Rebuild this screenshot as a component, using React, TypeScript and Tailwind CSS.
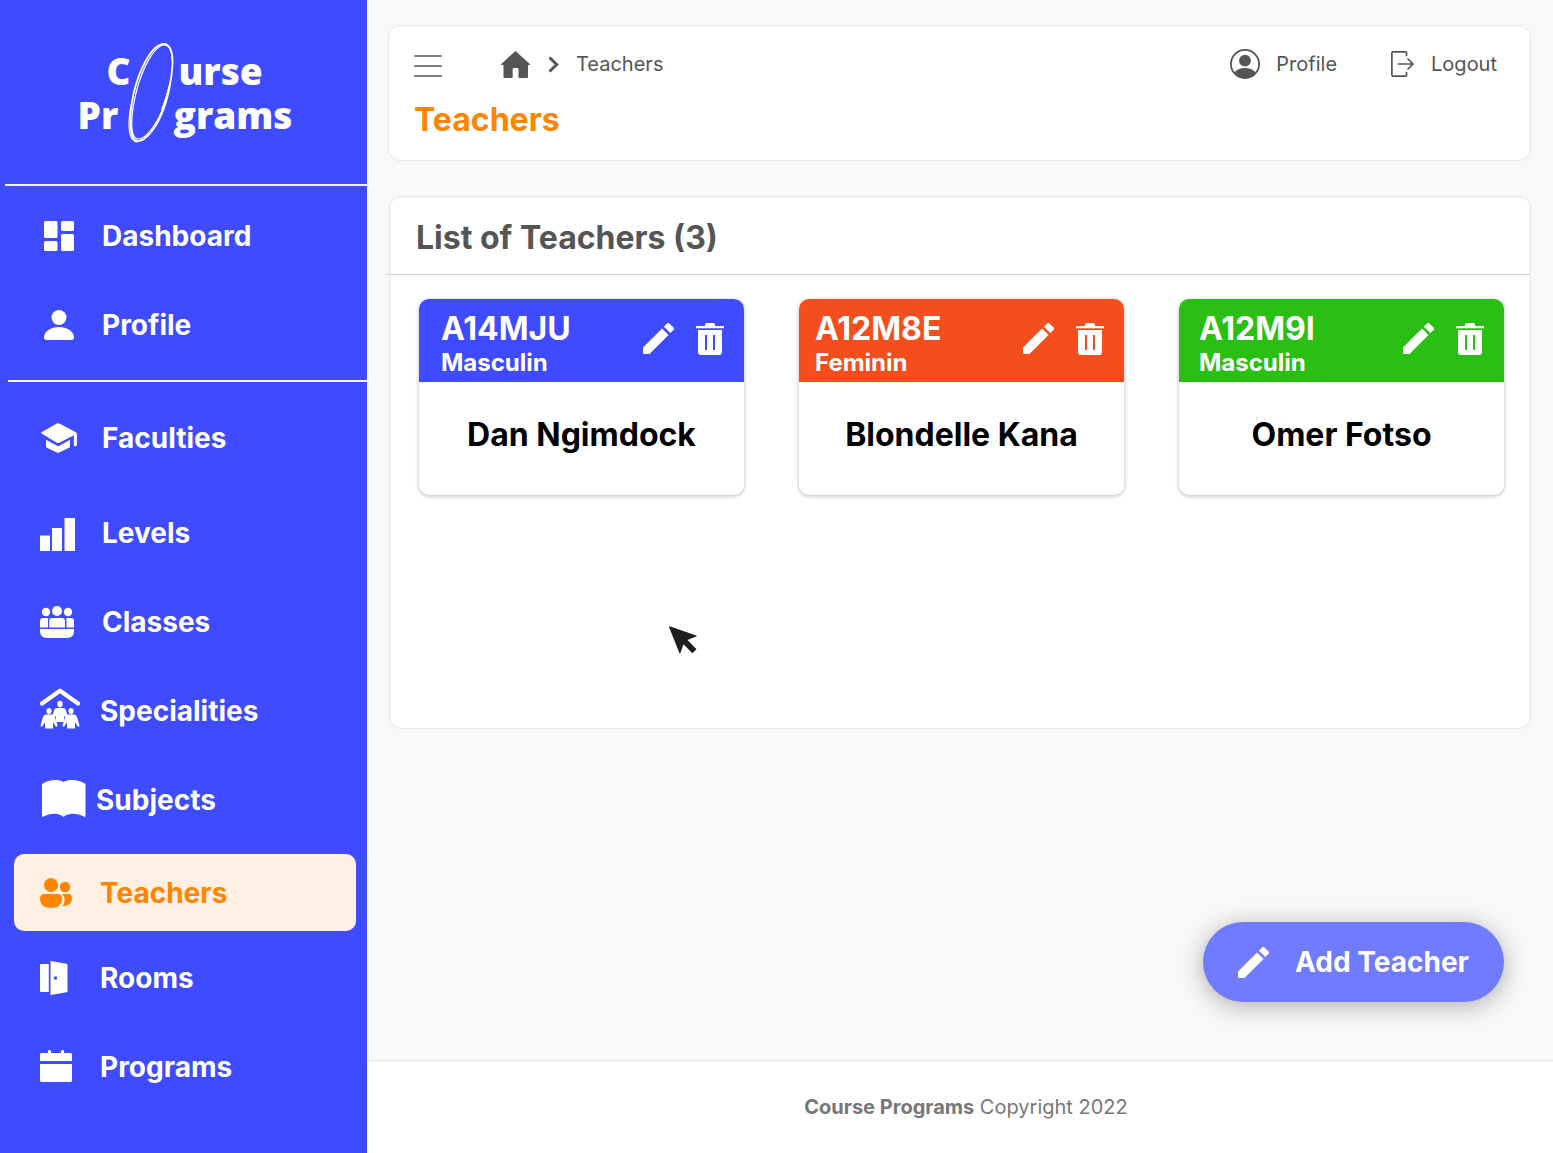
import React from "react";

type IconProps = { className?: string };

const Logo = () => (
  <div className="relative w-[220px] font-['Open_Sans',sans-serif] text-[37px] leading-[44px] font-extrabold text-white">
    <p className="flex pl-[29px]">
      <span className="w-[72px]">C</span>
      <span>urse</span>
    </p>
    <p className="flex">
      <span className="w-24">Pr</span>
      <span>grams</span>
    </p>
    <svg
      viewBox="0 0 220 104"
      aria-hidden="true"
      className="absolute -top-2 left-0 h-[104px] w-[220px]"
      fill="none"
      stroke="#fff"
      strokeLinecap="round"
    >
      <path
        strokeWidth="1.800"
        d="M84 68c5-10 10-28 10.500-45C95 9 91 2 84.500 3 73 5 61 29 55.500 53 50.500 76 51.500 99 59 100c8 1 20-13 27-33 4-11 6-21 7-30"
      />
      <path
        strokeWidth="1.200"
        d="M94 18c0-10-4-15-9-14-9 2-21 23-27 48-5 21-7 45 2 46 9 0 21-18 26-34 2-7 4-12 5-18"
      />
      <path strokeWidth="1.200" d="M85 67c1-6 4-12 7-25M53 64c-4 22-2 36 6 37" />
    </svg>
  </div>
);

const DashboardIcon = () => (
  <svg viewBox="-4 0 38 30" width="38" height="30" fill="currentColor">
    <rect width="13.500" height="17" rx="1.500" />
    <rect y="20" width="13.500" height="10" rx="1.500" />
    <rect x="17" width="13" height="10" rx="1.500" />
    <rect x="17" y="13" width="13" height="17" rx="1.500" />
  </svg>
);

const PersonIcon = () => (
  <svg viewBox="-4 0 38 30" width="38" height="30" fill="currentColor">
    <circle cx="15" cy="7.500" r="7.500" />
    <path d="M0 27.500C0 21.500 7 17 15 17s15 4.500 15 10.500c0 1.500-.8 2.500-2.500 2.500h-25C.8 30 0 29 0 27.500z" />
  </svg>
);

const FacultiesIcon = () => (
  <svg viewBox="-1 0 38 30" width="38" height="30" fill="currentColor">
    <path d="M.9 9 15.800.6q1.300-.7 2.600 0l16.500 8.600q1 .6 1 1.800v10.800a1.500 1.500 0 0 1-3 0V12.200L18.400 19.700q-1.300.6-2.600 0L.9 10.800Q-.3 9.900.9 9z" />
    <path d="M5 16.800l11 6q1.200.6 2.400 0l10.600-6v6.500q0 .9-.9 1.400L18.300 29.500q-1.200.7-2.400 0L5.900 24.700Q5 24.200 5 23.300z" />
  </svg>
);

const LevelsIcon = () => (
  <svg viewBox="1 -4 36 37" width="36" height="37" fill="currentColor">
    <rect x="1" y="17.500" width="10" height="15.500" />
    <rect x="13" y="10" width="10" height="23" />
    <rect x="25.500" width="10.500" height="33" />
  </svg>
);

const ClassesIcon = () => (
  <svg viewBox="2 0 34 32" width="34" height="32" fill="currentColor">
    <circle cx="19" cy="5" r="5" />
    <circle cx="8" cy="6" r="4.200" />
    <circle cx="30" cy="6" r="4.200" />
    <path d="M5 12h5.500q-.5 1.200-.5 3v6.500H2V15q0-3 3-3zM28 12h5q3 0 3 3v6.500h-7.500V15q0-1.800-.5-3zM14 12h10q3 0 3 3v6.500H11.200V15q0-3 2.800-3zM2 23h34v2q0 7-7 7H9q-7 0-7-7z" />
  </svg>
);

const FigureBody = ({ x, y }: { x: number; y: number }) => (
  <path
    transform={`translate(${x} ${y})`}
    d="M-3 0h6c1.400 0 2.200.8 2.800 2l2.600 8.500c.4 1.700-1.300 2.400-2 1L4 7.500V14H-4V7.500l-2.400 4c-.7 1.400-2.400.7-2-1L-5.800 2C-5.200.8-4.400 0-3 0z"
  />
);

const SpecialitiesIcon = () => (
  <svg viewBox="0 0 40 46" width="40" height="46" fill="currentColor">
    <path
      d="M2 15.500 20 2.700 38 15.500"
      fill="none"
      stroke="currentColor"
      strokeWidth="4.300"
      strokeLinecap="round"
      strokeLinejoin="round"
    />
    <ellipse cx="20" cy="16" rx="2.600" ry="3.200" />
    <ellipse cx="9" cy="23" rx="2.600" ry="2.900" />
    <ellipse cx="31" cy="23" rx="2.600" ry="2.900" />
    <FigureBody x={20} y={20} />
    <FigureBody x={9} y={26.5} />
    <FigureBody x={31} y={26.5} />
  </svg>
);

const SubjectsIcon = () => (
  <svg viewBox="-2 0 46 39" width="46" height="39" fill="currentColor">
    <path d="M0 4C6 0 15.500-1.500 21.500 2 27.500-1.500 37.500 0 43.500 4v32.500q-.5.700-1.200.2C36 33.500 27 32 21.500 37 16 32 7.500 33.500 1.200 36.700.5 37.200 0 36.500 0 36z" />
  </svg>
);

const TeachersIcon = () => (
  <svg viewBox="0 0 32 30" width="32" height="30" fill="currentColor">
    <circle cx="11" cy="7" r="7" />
    <circle cx="25" cy="9" r="5.200" />
    <path d="M4.500 16h13q4.500 0 4.500 4.500C22 27 17.500 30 11 30S0 27 0 20.500Q0 16 4.500 16zM22 16h6q4 0 4 4c0 5.500-4.500 8.500-9.500 8 1.500-2 2.200-4.500 2-7.500q0-3-2.500-4.500z" />
  </svg>
);

const RoomsIcon = () => (
  <svg viewBox="0 0 28 34" width="28" height="34" fill="currentColor">
    <path d="M1 3h7.800v28H1q-1 0-1-1V4q0-1 1-1z" />
    <path
      fillRule="evenodd"
      d="M10.500 0l16 2.800q1 .2 1 1.200v26q0 1-1 1.200l-16 2.800zM15.500 15.200a1.800 1.800 0 1 0 0 3.600 1.800 1.800 0 1 0 0-3.600z"
    />
  </svg>
);

const ProgramsIcon = () => (
  <svg viewBox="0 0 32 33" width="32" height="33" fill="currentColor">
    <path d="M1.500 3H8V1q0-1 1.500-1T11 1v2h10V1q0-1 1.500-1T24 1v2h6.500Q32 3 32 4.500V11H0V4.500Q0 3 1.500 3zM0 14h32v16.500q0 1.500-1.500 1.500h-29Q0 32 0 30.500z" />
  </svg>
);

const PencilIcon = () => (
  <svg viewBox="3 3 18 18" width="31" height="31" fill="currentColor">
    <path d="M3 17.460v3.040c0 .28.22.5.5.5h3.040c.13 0 .26-.05.35-.15L17.810 9.940l-3.750-3.750L3.150 17.100c-.1.100-.15.220-.15.360zM20.710 7.040a.996.996 0 0 0 0-1.410l-2.340-2.340a.996.996 0 0 0-1.410 0l-1.830 1.830 3.750 3.750 1.830-1.830z" />
  </svg>
);

const TrashIcon = () => (
  <svg viewBox="0 0 28 32" width="28" height="32" fill="currentColor">
    <path d="M0 3h9V1.500Q9 0 10.500 0h7Q19 0 19 1.500V3h9v2.200H0z" />
    <path
      fillRule="evenodd"
      d="M2 7h24v22q0 3-3 3H5q-3 0-3-3zM9 12v15h2V12zM17 12v15h2V12z"
    />
  </svg>
);

const MenuIcon = () => (
  <svg viewBox="0 0 28 22" width="28" height="22" stroke="currentColor" strokeWidth="1.400" strokeLinecap="round">
    <path d="M.7 1h26.600M.7 11h26.600M.7 21h26.600" />
  </svg>
);

const HomeIcon = () => (
  <svg viewBox="0 0 29 27" width="29" height="27" fill="currentColor">
    <path d="M14.500 0 29 13.200l-.5.900H27V26q0 1-1 1h-7.500q-1 0-1-1v-8q0-1-1-1h-3.800q-1 0-1 1v8q0 1-1 1H3.500q-1 0-1-1V14.100H.5L0 13.200z" />
  </svg>
);

const ChevronIcon = () => (
  <svg viewBox="0 0 11 17" width="11" height="17" fill="none" stroke="currentColor" strokeWidth="3">
    <path d="M1.500 1.500 8.700 8.500 1.500 15.500" />
  </svg>
);

const AvatarIcon = () => (
  <svg viewBox="0 0 30 30" width="30" height="30" fill="currentColor">
    <circle cx="15" cy="15" r="14.100" fill="none" stroke="currentColor" strokeWidth="1.800" />
    <circle cx="15" cy="11.700" r="5.900" />
    <path d="M4 24c2.500-3.200 6.500-5 11-5s8.500 1.800 11 5c-2.500 3.600-6.500 5.500-11 5.500S6.500 27.600 4 24z" />
  </svg>
);

const LogoutIcon = () => (
  <svg
    viewBox="0 0 24 26"
    width="24"
    height="26"
    fill="none"
    stroke="currentColor"
    strokeWidth="1.700"
    strokeLinecap="round"
    strokeLinejoin="round"
  >
    <path d="M15.500 4.500V2q0-1.100-1.100-1.100H2Q.9.900.9 2v22q0 1.100 1.100 1.100h12.400q1.100 0 1.100-1.100v-2.500" />
    <path d="M7.500 13H22M17 8l5 5-5 5" />
  </svg>
);

const CursorIcon = ({ className }: IconProps) => (
  <svg viewBox="0 0 28 28" width="28" height="28" fill="#1f1f1f" className={className} aria-hidden="true">
    <path d="M.6.3 27.200 9.500q1 .5 0 1.100L18.500 14l9 9.200-4.200 4-8.800-9-3 8.600q-.6 1.100-1.200 0L0 1Q0 0 .6.300z" />
  </svg>
);

type NavEntry = { label: string; icon: React.ReactNode; slot: string; active?: boolean };

const account: NavEntry[] = [
  { label: "Dashboard", icon: <DashboardIcon />, slot: "w-[62px]" },
  { label: "Profile", icon: <PersonIcon />, slot: "w-[62px]" },
];

const faculties: NavEntry[] = [{ label: "Faculties", icon: <FacultiesIcon />, slot: "w-[62px]" }];

const catalogue: NavEntry[] = [
  { label: "Levels", icon: <LevelsIcon />, slot: "w-[62px]" },
  { label: "Classes", icon: <ClassesIcon />, slot: "w-[62px]" },
  { label: "Specialities", icon: <SpecialitiesIcon />, slot: "w-[60px]" },
  { label: "Subjects", icon: <SubjectsIcon />, slot: "w-14" },
  { label: "Teachers", icon: <TeachersIcon />, slot: "w-[60px]", active: true },
  { label: "Rooms", icon: <RoomsIcon />, slot: "w-[60px]" },
  { label: "Programs", icon: <ProgramsIcon />, slot: "w-[60px]" },
];

const NavList = ({ items }: { items: NavEntry[] }) => (
  <ul>
    {items.map(({ label, icon, slot, active }) => (
      <li key={label}>
        <a
          href={`#${label.toLowerCase()}`}
          aria-current={active ? "page" : undefined}
          className={
            active
              ? "mt-2.5 mr-[11px] mb-0.5 ml-3.5 flex h-[77px] items-center rounded-[10px] bg-[#fff0e3] pl-[26px] text-[#ff8500]"
              : "flex h-[89px] items-center pl-10 text-white"
          }
        >
          <span className={`${slot} shrink-0`}>{icon}</span>
          <span className="text-[28px] leading-9 font-bold">{label}</span>
        </a>
      </li>
    ))}
  </ul>
);

const teachers = [
  { code: "A14MJU", gender: "Masculin", name: "Dan Ngimdock", tone: "bg-[#3f4bff] pl-[22px]" },
  { code: "A12M8E", gender: "Feminin", name: "Blondelle Kana", tone: "bg-[#f54e1e] pl-4" },
  { code: "A12M9I", gender: "Masculin", name: "Omer Fotso", tone: "bg-[#2abf13] pl-5" },
];

export default function App() {
  return (
    <div className="flex min-h-screen bg-[#f8f8f8] font-[Inter,sans-serif]">
      <aside className="w-[367px] shrink-0 bg-[#3f4bff]">
        <div className="flex h-[184px] justify-center pt-[49px] pl-2">
          <Logo />
        </div>
        <nav aria-label="Main">
          <div className="ml-[5px] h-0.5 bg-[#eef6ff]" />
          <div className="pt-[5px] pb-[11px]">
            <NavList items={account} />
          </div>
          <div className="ml-2 h-0.5 bg-[#eef6ff]" />
          <div className="flex flex-col gap-1.5 pt-[11px]">
            <NavList items={faculties} />
            <NavList items={catalogue} />
          </div>
        </nav>
      </aside>

      <div className="flex min-w-0 flex-1 flex-col">
        <main className="flex flex-1 flex-col pt-[25px] pr-[22px] pl-[21px]">
          <header className="rounded-xl border border-[#e6e6e6] bg-white px-[25px] pt-[18px] pb-5 text-[#555]">
            <div className="flex h-10 items-center text-xl">
              <button type="button" aria-label="Toggle menu" className="pt-1">
                <MenuIcon />
              </button>
              <nav aria-label="Breadcrumb" className="ml-[59px] flex items-center">
                <a href="#home" aria-label="Home">
                  <HomeIcon />
                </a>
                <span className="ml-[18px]">
                  <ChevronIcon />
                </span>
                <span className="ml-[17px]">Teachers</span>
              </nav>
              <div className="ml-auto flex items-center gap-[54px] pr-2">
                <a href="#profile" className="flex items-center gap-4">
                  <AvatarIcon />
                  Profile
                </a>
                <button type="button" className="flex items-center gap-4">
                  <LogoutIcon />
                  Logout
                </button>
              </div>
            </div>
            <h1 className="mt-4 text-[32px] leading-10 font-bold text-[#ff8500]">Teachers</h1>
          </header>

          <section className="relative mt-[35px] ml-px min-h-[533px] rounded-xl border border-[#e6e6e6] bg-white">
            <h2 className="px-[26px] pt-[21px] pb-4 text-[32px] leading-10 font-bold text-[#555]">
              List of Teachers (3)
            </h2>
            <div className="-ml-1 h-px bg-[#d0d0d0]" />
            <ul className="grid grid-cols-3 gap-[55px] pt-6 pr-[26px] pl-[29px]">
              {teachers.map((t) => (
                <li
                  key={t.code}
                  className="overflow-hidden rounded-[10px] bg-white shadow-[0_1px_4px_rgba(0,0,0,0.28)]"
                >
                  <div className={`flex h-[83px] items-center pr-5 text-white ${t.tone}`}>
                    <div className="pt-2 font-bold">
                      <p className="text-[32px] leading-9">{t.code}</p>
                      <p className="text-2xl leading-8">{t.gender}</p>
                    </div>
                    <div className="ml-auto flex items-center gap-[22px] pb-1">
                      <button type="button" aria-label={`Edit ${t.name}`}>
                        <PencilIcon />
                      </button>
                      <button type="button" aria-label={`Delete ${t.name}`}>
                        <TrashIcon />
                      </button>
                    </div>
                  </div>
                  <p className="pt-8 pb-10 text-center text-[32px] leading-[41px] font-bold text-black">{t.name}</p>
                </li>
              ))}
            </ul>
            <CursorIcon className="absolute top-[429px] left-[279px]" />
          </section>

          <button
            type="button"
            className="mt-auto mr-[27px] mb-[58px] flex h-20 items-center gap-[26px] self-end rounded-full bg-[#707bff] px-[35px] text-[28px] font-bold text-white shadow-[0_4px_24px_rgba(0,0,0,0.3)]"
          >
            <PencilIcon />
            Add Teacher
          </button>
        </main>

        <footer className="border-t border-[#e6e6e6] bg-white py-8 pl-3 text-center text-xl text-[#777]">
          <strong className="font-bold">Course Programs</strong> Copyright 2022
        </footer>
      </div>
    </div>
  );
}
